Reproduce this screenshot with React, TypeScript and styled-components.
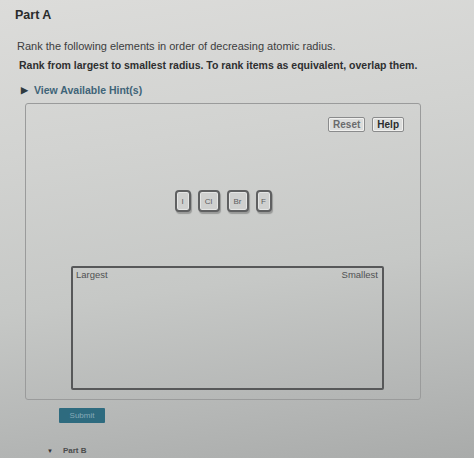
import { createGlobalStyle, styled } from 'styled-components'

const GlobalStyle = createGlobalStyle`
  html, body {
    margin: 0;
    padding: 0;
  }
  body {
    font-family: 'Liberation Sans', Arial, sans-serif;
  }
`

const elements = ['I', 'Cl', 'Br', 'F']

export default function App() {
  return (
    <>
      <GlobalStyle />
      <Page>
        <PartTitle>Part A</PartTitle>
        <Body>
          <Prompt>Rank the following elements in order of decreasing atomic radius.</Prompt>
          <Instruction>
            Rank from largest to smallest radius. To rank items as equivalent, overlap them.
          </Instruction>
          <HintToggle>
            <Caret>▶</Caret>
            View Available Hint(s)
          </HintToggle>
        </Body>
        <Panel>
          <Toolbar>
            <ToolButton>Reset</ToolButton>
            <ToolButton $strong>Help</ToolButton>
          </Toolbar>
          <TileRow>
            {elements.map(el => (
              <Tile key={el} $narrow={el.length === 1}>
                {el}
              </Tile>
            ))}
          </TileRow>
          <RankBox>
            <RankLabel>Largest</RankLabel>
            <RankLabel>Smallest</RankLabel>
          </RankBox>
        </Panel>
        <SubmitButton>Submit</SubmitButton>
        <NextPart>
          <SmallCaret>▼</SmallCaret>
          Part B
        </NextPart>
      </Page>
    </>
  )
}

const Page = styled.div`
  width: 474px;
  height: 458px;
  overflow: hidden;
  box-sizing: border-box;
  color: #2e2f30;
  background: linear-gradient(
    172deg,
    #dcdcda 0%,
    #d2d3d1 30%,
    #c6c8c6 60%,
    #b4b6b5 85%,
    #a9abaa 100%
  );
`

const PartTitle = styled.div`
  padding: 8px 0 0 15px;
  height: 22px;
  font-size: 12.5px;
  font-weight: 700;
  color: #2a2b2c;
`

const Body = styled.div`
  padding-left: 17px;
`

const Prompt = styled.p`
  margin: 10px 0 0;
  font-size: 11px;
  color: #3c3d3e;
`

const Instruction = styled.p`
  margin: 7px 0 0 2px;
  font-size: 10.5px;
  font-weight: 700;
  color: #2e2f30;
`

const HintToggle = styled.div`
  display: flex;
  align-items: center;
  gap: 6px;
  margin: 13px 0 0 4px;
  font-size: 10.5px;
  font-weight: 700;
  color: #3f6478;
`

const Caret = styled.span`
  font-size: 9px;
  color: #2e3a40;
`

const Panel = styled.div`
  margin: 7px 0 0 25px;
  width: 396px;
  height: 297px;
  box-sizing: border-box;
  border: 1px solid #9a9b9b;
  border-radius: 3px;
  display: flex;
  flex-direction: column;
`

const Toolbar = styled.div`
  display: flex;
  justify-content: flex-end;
  gap: 7px;
  padding: 13px 16px 0 0;
`

const ToolButton = styled.div<{ $strong?: boolean }>`
  padding: 1px 4px;
  font-size: 10px;
  font-weight: 700;
  border: 1px solid #8a8b8c;
  border-radius: 2px;
  background: #dcdddc;
  color: ${props => (props.$strong ? '#2a2b2c' : '#6a6b6c')};
  box-shadow: inset 0 0 0 1px #f0f0ee;
`

const TileRow = styled.div`
  display: flex;
  justify-content: center;
  gap: 7px;
  margin-top: 58px;
`

const Tile = styled.div<{ $narrow?: boolean }>`
  min-width: ${props => (props.$narrow ? '10px' : '16px')};
  height: 18px;
  padding: 0 1px;
  display: flex;
  align-items: center;
  justify-content: center;
  font-size: 8px;
  color: #5c5d5e;
  background: #cfd0cf;
  border: 2px solid #5f6061;
  border-radius: 4px;
  box-shadow: inset 0 0 0 1px #e4e5e4, 1px 2px 1px rgba(0, 0, 0, 0.25);
`

const RankBox = styled.div`
  margin: 54px 0 0 45px;
  width: 313px;
  height: 124px;
  box-sizing: border-box;
  border: 2px solid #575859;
  border-radius: 2px;
  display: flex;
  justify-content: space-between;
  align-items: flex-start;
  padding: 1px 4px 0 3px;
`

const RankLabel = styled.span`
  font-size: 9.5px;
  color: #505152;
`

const SubmitButton = styled.div`
  margin: 8px 0 0 59px;
  width: 46px;
  height: 15px;
  display: flex;
  align-items: center;
  justify-content: center;
  font-size: 8px;
  color: #86aab8;
  background: #2e6b7f;
  border-radius: 1px;
`

const NextPart = styled.div`
  display: flex;
  align-items: center;
  gap: 10px;
  margin: 23px 0 0 47px;
  font-size: 8px;
  font-weight: 700;
  color: #4b4c4d;
`

const SmallCaret = styled.span`
  font-size: 6px;
  color: #333;
`
